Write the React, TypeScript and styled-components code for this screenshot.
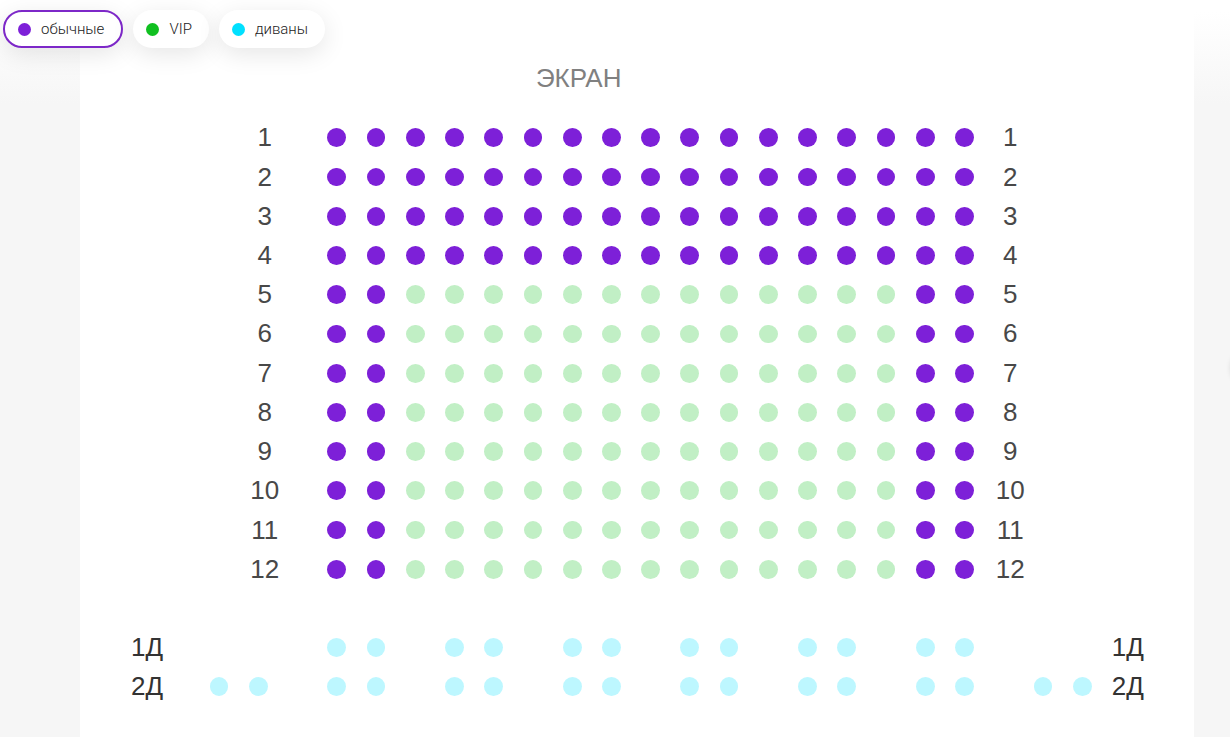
import React, { useState } from "react";
import styled, { createGlobalStyle } from "styled-components";

type Kind = "regular" | "vip" | "sofa";

const COLORS: Record<Kind, string> = {
  regular: "#7d20d8",
  vip: "#10c020",
  sofa: "#00e0ff",
};

const GlobalStyle = createGlobalStyle`
  *, *::before, *::after { box-sizing: border-box; }
  body { margin: 0; background: #f6f6f6; }
`;

const Page = styled.div`
  position: relative;
  min-height: 100vh;
  padding: 0 36px 0 80px;
  overflow: hidden;
  background: linear-gradient(#ffffff 12px, #f6f6f6 104px);
`;

const Toolbar = styled.div`
  position: absolute;
  top: 10px;
  left: 3px;
  display: flex;
  gap: 10px;
`;

const Chip = styled.button<{ $active: boolean }>`
  display: flex;
  align-items: center;
  gap: 10px;
  height: 38px;
  padding: 0 17px 0 13px;
  border: ${(p) => (p.$active ? "2px solid #7d28c8" : "0")};
  border-radius: 19px;
  background: #ffffff;
  box-shadow: 0 6px 24px rgba(0, 0, 0, 0.1);
  color: #222222;
  font: 300 15px/20px Roboto, sans-serif;
  cursor: pointer;
`;

const ChipDot = styled.span<{ $kind: Kind }>`
  width: 13px;
  height: 13px;
  border-radius: 50%;
  background: ${(p) => COLORS[p.$kind]};
`;

const Hall = styled.main`
  min-height: 100vh;
  padding: 59px 53px 30px 41px;
  background: #ffffff;
`;

const Row = styled.div<{ $after?: number }>`
  display: grid;
  grid-template-columns: repeat(26, minmax(0, 1fr));
  align-items: center;
  aspect-ratio: 26 / 1;
  margin-bottom: ${(p) => p.$after ?? 0}px;
`;

const Label = styled.span<{ $col: number; $tone?: string }>`
  grid-column: ${(p) => p.$col};
  grid-row: 1;
  display: flex;
  justify-content: center;
  padding: 0 0 1px 13px;
  color: ${(p) => p.$tone ?? "#484848"};
  font: 26px/30px "Liberation Sans", Arial, sans-serif;
  white-space: nowrap;
`;

const Seat = styled.button<{ $col: number; $kind: Kind; $dim: boolean }>`
  grid-column: ${(p) => p.$col};
  grid-row: 1;
  justify-self: center;
  width: 48%;
  aspect-ratio: 1;
  padding: 0;
  border: 0;
  border-radius: 50%;
  background: ${(p) => COLORS[p.$kind]};
  opacity: ${(p) => (p.$dim ? 0.26 : 1)};
  cursor: pointer;
`;

const NextButton = styled.button`
  position: absolute;
  top: 350px;
  right: -38px;
  width: 36px;
  height: 36px;
  padding: 0;
  border: 0;
  border-radius: 50%;
  background: #ffffff;
  box-shadow: 0 0 6px rgba(0, 0, 0, 0.2);
`;

const FILTERS: { kind: Kind; title: string }[] = [
  { kind: "regular", title: "обычные" },
  { kind: "vip", title: "VIP" },
  { kind: "sofa", title: "диваны" },
];

interface RowData {
  name: string;
  labels: [number, number];
  seats: { col: number; kind: Kind }[];
}

const FIRST_COL = 6;
const SEATS_IN_ROW = 17;

const mainRows: RowData[] = Array.from({ length: 12 }, (_, r) => ({
  name: String(r + 1),
  labels: [4, 23],
  seats: Array.from({ length: SEATS_IN_ROW }, (_, s) => ({
    col: FIRST_COL + s,
    kind: r >= 4 && s >= 2 && s < SEATS_IN_ROW - 2 ? "vip" : "regular",
  })),
}));

const SOFAS = [6, 7, 9, 10, 12, 13, 15, 16, 18, 19, 21, 22];

const sofaRows: RowData[] = [
  { name: "1Д", cols: SOFAS },
  { name: "2Д", cols: [3, 4, ...SOFAS, 24, 25] },
].map(({ name, cols }) => ({
  name,
  labels: [1, 26],
  seats: cols.map((col) => ({ col, kind: "sofa" })),
}));

export default function App() {
  const [active, setActive] = useState<Kind>("regular");

  const renderRow = (row: RowData, after?: number) => (
    <Row key={row.name} $after={after}>
      <Label $col={row.labels[0]} $tone={row.labels[0] === 1 ? "#333333" : undefined}>
        {row.name}
      </Label>
      {row.seats.map((seat, i) => (
        <Seat
          key={seat.col}
          type="button"
          aria-label={`Ряд ${row.name}, место ${i + 1}`}
          $col={seat.col}
          $kind={seat.kind}
          $dim={seat.kind !== active}
        />
      ))}
      <Label $col={row.labels[1]} $tone={row.labels[1] === 26 ? "#333333" : undefined}>
        {row.name}
      </Label>
    </Row>
  );

  return (
    <>
      <GlobalStyle />
      <Page>
        <Hall>
          <Row $after={20}>
            <Label $col={12} $tone="#808080">
              ЭКРАН
            </Label>
          </Row>
          {mainRows.map((row, i) => renderRow(row, i === 11 ? 39 : 0))}
          {sofaRows.map((row) => renderRow(row))}
        </Hall>
        <Toolbar>
          {FILTERS.map(({ kind, title }) => (
            <Chip
              key={kind}
              type="button"
              aria-pressed={active === kind}
              $active={active === kind}
              onClick={() => setActive(kind)}
            >
              <ChipDot $kind={kind} />
              {title}
            </Chip>
          ))}
        </Toolbar>
        <NextButton type="button" aria-label="Далее" />
      </Page>
    </>
  );
}
